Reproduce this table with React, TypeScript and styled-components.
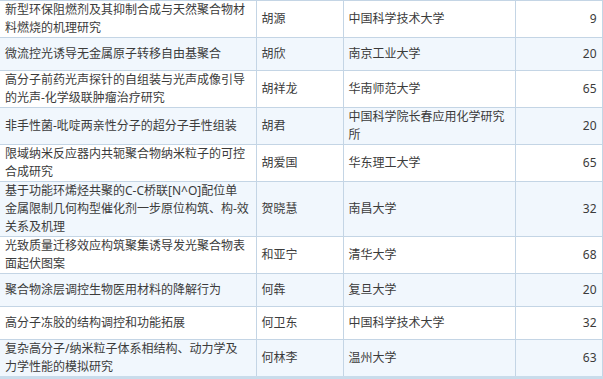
import styled, { createGlobalStyle } from "styled-components";

const GlobalStyle = createGlobalStyle`
  html, body {
    margin: 0;
    padding: 0;
    background: #ffffff;
  }
`;

const Wrapper = styled.div`
  width: 603px;
  height: 379px;
  overflow: hidden;
  font-family: "Noto Sans", "Noto Sans CJK SC", sans-serif;
  font-size: 12px;
  line-height: 18px;
  color: #3b3b3b;
`;

const Table = styled.table`
  width: 602px;
  border-collapse: collapse;
  table-layout: fixed;
  border-top: 1px solid #c4d5e5;
  border-bottom: 3px solid #c9dceb;
`;

const Col = styled.col<{ $width: number }>`
  width: ${(p) => p.$width}px;
`;

const Row = styled.tr<{ $striped: boolean }>`
  background: ${(p) => (p.$striped ? "#f1f7fd" : "#ffffff")};
  border-bottom: 1px solid #c4d5e5;
`;

const Cell = styled.td<{ $align?: "left" | "right" }>`
  height: 32px;
  padding: 0 5px;
  vertical-align: middle;
  text-align: ${(p) => p.$align ?? "left"};
  border-right: 1px solid #c4d5e5;
  white-space: pre-line;
  word-break: break-all;
`;

const columns = [256, 87, 172, 87];

const rows = [
  { title: "新型环保阻燃剂及其抑制合成与天然聚合物材\n料燃烧的机理研究", name: "胡源", school: "中国科学技术大学", count: 9 },
  { title: "微流控光诱导无金属原子转移自由基聚合", name: "胡欣", school: "南京工业大学", count: 20 },
  { title: "高分子前药光声探针的自组装与光声成像引导\n的光声-化学级联肿瘤治疗研究", name: "胡祥龙", school: "华南师范大学", count: 65 },
  { title: "非手性菌-吡啶两亲性分子的超分子手性组装", name: "胡君", school: "中国科学院长春应用化学研究\n所", count: 20 },
  { title: "限域纳米反应器内共轭聚合物纳米粒子的可控\n合成研究", name: "胡爱国", school: "华东理工大学", count: 65 },
  { title: "基于功能环烯烃共聚的C-C桥联[N^O]配位单\n金属限制几何构型催化剂一步原位构筑、构-效\n关系及机理", name: "贺晓慧", school: "南昌大学", count: 32 },
  { title: "光致质量迁移效应构筑聚集诱导发光聚合物表\n面起伏图案", name: "和亚宁", school: "清华大学", count: 68 },
  { title: "聚合物涂层调控生物医用材料的降解行为", name: "何犇", school: "复旦大学", count: 20 },
  { title: "高分子冻胶的结构调控和功能拓展", name: "何卫东", school: "中国科学技术大学", count: 32 },
  { title: "复杂高分子/纳米粒子体系相结构、动力学及\n力学性能的模拟研究", name: "何林李", school: "温州大学", count: 63 },
];

export default function App() {
  return (
    <Wrapper>
      <GlobalStyle />
      <Table>
        <colgroup>
          {columns.map((width, index) => (
            <Col key={index} $width={width} />
          ))}
        </colgroup>
        <tbody>
          {rows.map((row, index) => (
            <Row key={index} $striped={index % 2 === 1}>
              <Cell>{row.title}</Cell>
              <Cell>{row.name}</Cell>
              <Cell>{row.school}</Cell>
              <Cell $align="right">{row.count}</Cell>
            </Row>
          ))}
        </tbody>
      </Table>
    </Wrapper>
  );
}
